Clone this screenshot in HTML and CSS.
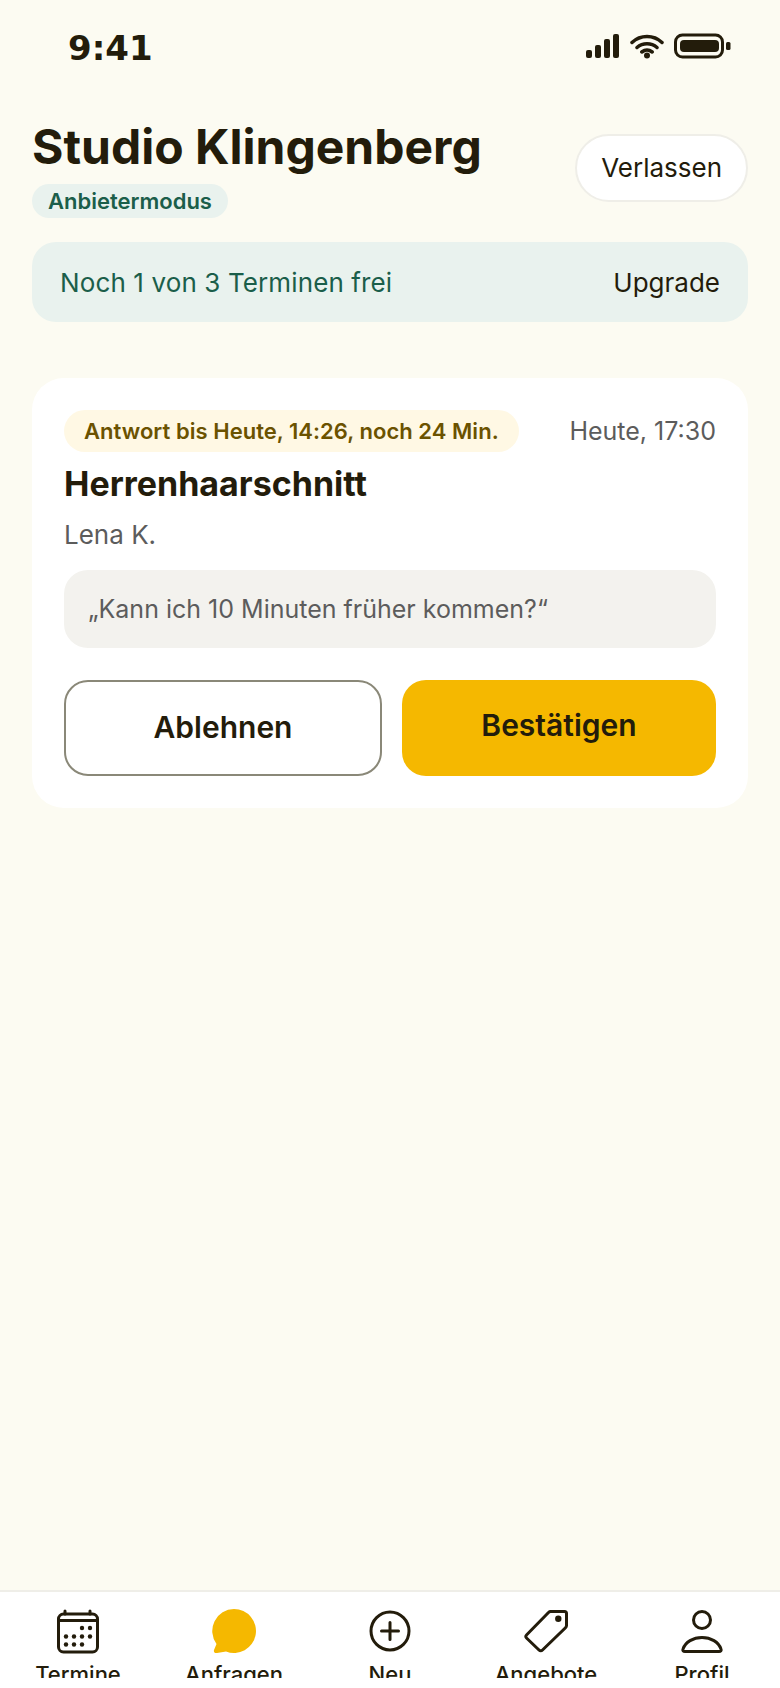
FILE: index.html
```html
<!DOCTYPE html>
<html lang="de">
<head>
<meta charset="utf-8">
<title>Studio Klingenberg</title>
<link rel="stylesheet" href="styles.css">
</head>
<body>
<div class="phone">
  <div class="status">
    <span class="time">9:41</span>
    <div class="status-icons">
      <svg class="ic-signal" width="34" height="26" viewBox="0 0 34 26"><rect x="0" y="17" width="6" height="8" rx="2"/><rect x="9" y="12" width="6" height="13" rx="2"/><rect x="18" y="6" width="6" height="19" rx="2"/><rect x="27" y="1" width="6" height="24" rx="2"/></svg>
      <svg class="ic-wifi" width="34" height="26" viewBox="0 0 34 26"><path d="M2 9.500C10.500 1.500 23.500 1.500 32 9.500M7 14.500C12.800 9.500 21.200 9.500 27 14.500M11.800 19C15 16.500 19 16.500 22.200 19"/><circle cx="17" cy="22.500" r="3"/></svg>
      <svg class="ic-batt" width="58" height="26" viewBox="0 0 58 26"><rect class="batt-frame" x="1.500" y="2" width="47" height="22" rx="7"/><rect x="6" y="7" width="39" height="12" rx="4"/><rect x="52" y="9" width="4.500" height="8" rx="1.500"/></svg>
    </div>
  </div>
  <main class="content">
    <header class="head">
      <div class="head-text">
        <h1 class="title">Studio Klingenberg</h1>
        <span class="mode">Anbietermodus</span>
      </div>
      <a class="leave">Verlassen</a>
    </header>
    <section class="quota">
      <span class="quota-text">Noch 1 von 3 Terminen frei</span>
      <a class="quota-link">Upgrade</a>
    </section>
    <article class="card">
      <div class="card-top">
        <span class="deadline">Antwort bis Heute, 14:26, noch 24 Min.</span>
        <span class="when">Heute, 17:30</span>
      </div>
      <h2 class="service">Herrenhaarschnitt</h2>
      <p class="client">Lena K.</p>
      <p class="note">„Kann ich 10 Minuten früher kommen?“</p>
      <div class="actions">
        <a class="btn btn-decline">Ablehnen</a>
        <a class="btn btn-confirm">Bestätigen</a>
      </div>
    </article>
  </main>
  <nav class="nav">
    <div class="nav-item">
      <svg class="nav-icon" width="48" height="48" viewBox="0 0 48 48"><rect x="4.500" y="7" width="39" height="38" rx="5"/><path d="M4.500 13.500H43.500M11 4V7M36 4V7"/><g class="fill"><circle cx="28" cy="21" r="2.200"/><circle cx="36" cy="21" r="2.200"/><circle cx="12" cy="29.500" r="2.200"/><circle cx="20" cy="29.500" r="2.200"/><circle cx="28" cy="29.500" r="2.200"/><circle cx="36" cy="29.500" r="2.200"/><circle cx="12" cy="37.500" r="2.200"/><circle cx="20" cy="37.500" r="2.200"/><circle cx="28" cy="37.500" r="2.200"/></g></svg>
      <span class="nav-label">Termine</span>
    </div>
    <div class="nav-item">
      <svg class="nav-icon" width="48" height="48" viewBox="0 0 48 48"><path class="chat" d="M24 2A22 22 0 1 1 16 44.500L7 46C4.500 46.300 3.500 45 4 43L6.500 37A22 22 0 0 1 24 2Z"/></svg>
      <span class="nav-label">Anfragen</span>
    </div>
    <div class="nav-item">
      <svg class="nav-icon" width="48" height="48" viewBox="0 0 48 48"><circle cx="24" cy="24" r="19"/><path d="M24 15.500V32.500M15.500 24H32.500"/></svg>
      <span class="nav-label">Neu</span>
    </div>
    <div class="nav-item">
      <svg class="nav-icon" width="48" height="48" viewBox="0 0 48 48"><path d="M28.500 4.500H42.500C44 4.500 44.500 5.500 44.500 6.500V18.500C44.500 19.500 44 20.200 43.500 20.700L20.500 43C19.500 44 18 44 17 43L4.500 31C3.500 30 3.500 29 4.500 28L26.500 5.500C27 5 27.700 4.500 28.500 4.500Z"/><circle class="fill" cx="36.300" cy="11.700" r="3.200"/></svg>
      <span class="nav-label">Angebote</span>
    </div>
    <div class="nav-item">
      <svg class="nav-icon" width="48" height="48" viewBox="0 0 48 48"><circle cx="24" cy="13" r="8.500"/><path d="M7 44.500H41C42.800 44.500 43.600 43.500 43 42C40.500 35 33 30.500 24 30.500S7.500 35 5 42C4.400 43.500 5.200 44.500 7 44.500Z"/></svg>
      <span class="nav-label">Profil</span>
    </div>
  </nav>
</div>
</body>
</html>
```
FILE: styles.css
```css
* { box-sizing: border-box; }
html, body { margin: 0; padding: 0; }
body {
  background: #fcfbf2;
  color: #231c0b;
  font-family: Inter, "Liberation Sans", sans-serif;
}
.phone {
  width: 780px;
  height: 1688px;
  display: flex;
  flex-direction: column;
  overflow: hidden;
}
.status {
  height: 118px;
  flex: none;
  display: flex;
  justify-content: space-between;
  align-items: flex-start;
  padding: 28px 48px 0 68px;
}
.time {
  font-family: "DejaVu Sans", sans-serif;
  font-weight: 700;
  font-size: 34px;
  line-height: 40px;
}
.status-icons {
  display: flex;
  align-items: center;
  gap: 10px;
  padding-top: 5px;
}
.status-icons svg { display: block; fill: #231c0b; }
.ic-wifi path { fill: none; stroke: #231c0b; stroke-width: 3.500; stroke-linecap: round; }
.batt-frame { fill: none; stroke: #231c0b; stroke-width: 3; }
.content { flex: 1; padding: 0 32px; }
.head {
  display: flex;
  justify-content: space-between;
  align-items: center;
}
.title {
  margin: 0 0 8px;
  font-size: 48px;
  line-height: 58px;
  font-weight: 700;
}
.mode {
  display: inline-block;
  height: 34px;
  line-height: 34px;
  padding: 0 16px;
  border-radius: 17px;
  background: #e9f2ee;
  color: #1b5e4a;
  font-size: 22px;
  font-weight: 600;
}
.head-text { display: flex; flex-direction: column; align-items: flex-start; }
.leave {
  height: 68px;
  line-height: 64px;
  padding: 0 24px;
  border: 2px solid #efeee8;
  border-radius: 34px;
  background: #fff;
  font-size: 26px;
  font-weight: 400;
}
.quota {
  margin-top: 24px;
  height: 80px;
  padding: 0 28px;
  display: flex;
  justify-content: space-between;
  align-items: center;
  border-radius: 24px;
  background: #e9f2ee;
  font-size: 26px;
}
.quota-text { color: #1b5e4a; letter-spacing: 0.12px; }
.quota-link { font-weight: 400; }
.card {
  margin-top: 56px;
  padding: 32px;
  border-radius: 32px;
  background: #fff;
}
.card-top {
  display: flex;
  justify-content: space-between;
  align-items: center;
}
.deadline {
  height: 42px;
  line-height: 42px;
  padding: 0 20px;
  border-radius: 21px;
  background: #fff8e4;
  color: #6b5200;
  font-size: 22px;
  font-weight: 600;
  letter-spacing: 0.04px;
}
.when { color: #5c5c5c; font-size: 25px; }
.service {
  margin: 8px 0 0;
  font-size: 34px;
  line-height: 48px;
  font-weight: 700;
}
.client {
  margin: 8px 0 0;
  color: #5c5c5c;
  font-size: 26px;
  line-height: 38px;
}
.note {
  margin: 16px 0 0;
  padding: 20px 24px;
  border-radius: 24px;
  background: #f3f2ee;
  color: #5c5c5c;
  font-size: 25px;
  line-height: 38px;
}
.actions { margin-top: 32px; display: flex; gap: 20px; }
.btn {
  box-sizing: content-box;
  flex: 1 1 0;
  padding: 27px 0 29px;
  border-radius: 24px;
  text-align: center;
  font-size: 30px;
  line-height: 36px;
  font-weight: 600;
}
.btn-decline { background: #fff; border: 2px solid #8a8878; }
.btn-confirm { background: #f5b800; }
.nav {
  flex: none;
  height: 98px;
  display: grid;
  grid-template-columns: repeat(5, 1fr);
  border-top: 2px solid #efeee8;
  background: #fff;
  padding-top: 15px;
}
.nav-item {
  height: 71px;
  overflow: hidden;
  display: flex;
  flex-direction: column;
  align-items: center;
}
.nav-icon {
  display: block;
  flex: none;
  fill: none;
  stroke: #231c0b;
  stroke-width: 3;
  stroke-linejoin: round;
  stroke-linecap: round;
}
.nav-icon .fill { fill: #231c0b; stroke: none; }
.nav-icon .chat { fill: #f5b800; stroke: none; }
.nav-label {
  margin-top: 4px;
  font-size: 22px;
  line-height: 30px;
  font-weight: 500;
}
```
